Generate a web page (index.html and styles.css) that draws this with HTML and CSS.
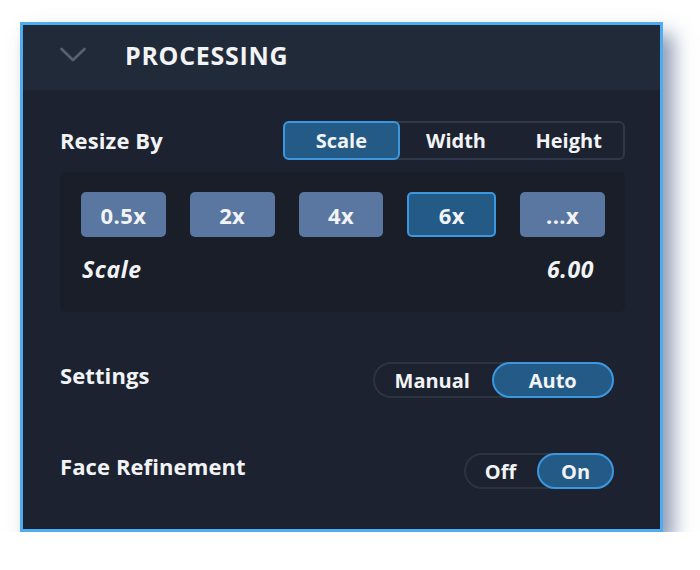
FILE: index.html
```html
<!DOCTYPE html>
<html>
<head>
<meta charset="utf-8">
<link rel="stylesheet" href="styles.css">
</head>
<body>
<div class="panel">
  <div class="header">
    <svg class="chev" width="28" height="17" viewBox="0 0 28 17"><path d="M2.5 3 L14 14 L25.5 3" fill="none" stroke="#56606e" stroke-width="2.8" stroke-linecap="round" stroke-linejoin="round"/></svg>
    <span class="title">PROCESSING</span>
  </div>
  <div class="body">
    <div class="row resize-row">
      <span class="label">Resize By</span>
      <div class="seg">
        <div class="seg-item active">Scale</div>
        <div class="seg-item">Width</div>
        <div class="seg-item">Height</div>
      </div>
    </div>
    <div class="scale-box">
      <div class="btns">
        <div class="btn">0.5x</div>
        <div class="btn">2x</div>
        <div class="btn">4x</div>
        <div class="btn active">6x</div>
        <div class="btn">...x</div>
      </div>
      <div class="scale-row">
        <span class="it">Scale</span>
        <span class="it">6.00</span>
      </div>
    </div>
    <div class="row settings-row">
      <span class="label raised">Settings</span>
      <div class="pill pill-wide">
        <div class="pill-item">Manual</div>
        <div class="pill-item active">Auto</div>
      </div>
    </div>
    <div class="row face-row">
      <span class="label raised">Face Refinement</span>
      <div class="pill pill-narrow">
        <div class="pill-item">Off</div>
        <div class="pill-item active">On</div>
      </div>
    </div>
  </div>
</div>
</body>
</html>
```
FILE: styles.css
```css
html, body {
  margin: 0;
  padding: 0;
  background: #ffffff;
}
body {
  font-family: "Open Sans", Lato, sans-serif;
  color: #f1f3f5;
}
.panel {
  margin: 22px 0 0 20px;
  width: 643px;
  height: 510px;
  box-sizing: border-box;
  border: 3px solid #4eacf3;
  background: #1c2230;
  box-shadow: 10px 12px 18px rgba(45, 70, 115, 0.55);
}
.header {
  height: 65px;
  background: #212a38;
  display: flex;
  align-items: center;
  padding-left: 36px;
}
.chev {
  margin-right: 38px;
  margin-top: -6px;
}
.title {
  font-size: 25px;
  font-weight: 700;
  letter-spacing: 0.7px;
  margin-top: -6px;
}
.body {
  padding: 31px 35px 0 37px;
}
.row {
  display: flex;
  align-items: center;
  justify-content: space-between;
}
.label {
  font-size: 22px;
  font-weight: 700;
  letter-spacing: 0.1px;
  margin-bottom: 2px;
}
.label.raised {
  margin-bottom: 0;
  margin-top: -11px;
}
.seg {
  display: flex;
  width: 342px;
  height: 39px;
  box-sizing: border-box;
  border: 2px solid #303949;
  border-radius: 6px;
}
.seg-item {
  flex: 1;
  display: flex;
  align-items: center;
  justify-content: center;
  font-size: 20px;
  font-weight: 700;
  margin: -2px 0;
}
.seg-item:first-child { margin-left: -2px; }
.seg-item:last-child { margin-right: -2px; }
.seg-item.active {
  background: #245a86;
  border: 2px solid #3a97e0;
  border-radius: 6px;
}
.scale-box {
  margin-top: 12px;
  height: 140px;
  box-sizing: border-box;
  background: #191e29;
  border-radius: 6px;
  padding: 20px 20px 0 21px;
}
.btns {
  display: flex;
  gap: 24px;
}
.btn {
  flex: 1;
  height: 45px;
  box-sizing: border-box;
  background: #5a77a1;
  border-radius: 5px;
  display: flex;
  align-items: center;
  justify-content: center;
  font-size: 22px;
  font-weight: 700;
  letter-spacing: 0.4px;
}
.btn.active {
  background: #245a86;
  border: 2px solid #3a97e0;
}
.scale-row {
  display: flex;
  justify-content: space-between;
  padding: 17px 11px 0 1px;
}
.it {
  font-style: italic;
  font-weight: 700;
  font-size: 23px;
  letter-spacing: 0.6px;
  line-height: 31px;
}
.settings-row {
  margin-top: 50px;
}
.face-row {
  margin-top: 55px;
}
.pill {
  display: flex;
  height: 36px;
  box-sizing: border-box;
  border: 2px solid #2c3442;
  border-radius: 18px;
  margin-right: 11px;
}
.pill-wide { width: 241px; }
.pill-narrow { width: 150px; }
.pill-item {
  flex: 1;
  display: flex;
  align-items: center;
  justify-content: center;
  font-size: 20px;
  font-weight: 700;
  margin: -2px 0;
}
.pill-item:first-child { margin-left: -2px; }
.pill-item:last-child { margin-right: -2px; }
.pill-item.active {
  background: #245a86;
  border: 2px solid #3a97e0;
  border-radius: 18px;
}
```
